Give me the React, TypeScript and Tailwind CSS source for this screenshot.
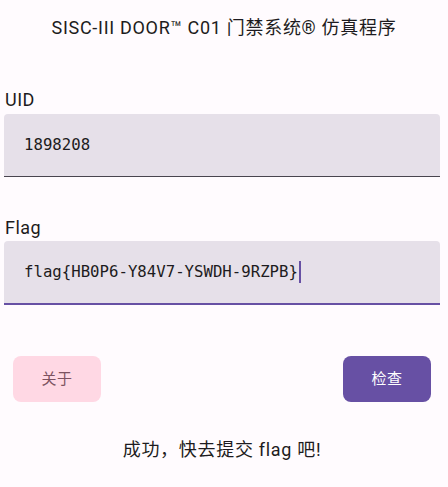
export default function App() {
  return (
    <div
      className="min-h-[487px] w-[448px] bg-[#fffbfe] text-[#1d1b20]"
      style={{ fontFamily: 'Roboto, "Noto Sans CJK SC", sans-serif' }}
    >
      <div className="flex h-[54px] items-center justify-center text-[18px] tracking-[0.7px]">
        SISC-III DOOR™ C01 门禁系统® 仿真程序
      </div>

      <div className="pl-1 pr-2">
        {/* UID */}
        <div className="mt-[34px] pl-px text-[18px] leading-6 tracking-[0.5px]">UID</div>
        <div className="mt-[2px] flex h-[63px] items-center rounded-t-[4px] border-b border-[#49454f] bg-[#e6e0e9] px-5">
          <span className="text-[15.7px]" style={{ fontFamily: '"DejaVu Sans Mono", monospace' }}>
            1898208
          </span>
        </div>

        {/* Flag */}
        <div className="mt-[39px] pl-px text-[18px] leading-6 tracking-[0.5px]">Flag</div>
        <div className="mt-[1px] flex h-[64px] items-center rounded-t-[4px] border-b-2 border-[#6750a4] bg-[#e6e0e9] px-5">
          <span className="text-[15.7px]" style={{ fontFamily: '"DejaVu Sans Mono", monospace' }}>
            flag{'{'}HB0P6-Y84V7-YSWDH-9RZPB{'}'}
          </span>
          <span className="ml-px h-[22px] w-[2px] bg-[#6750a4]" />
        </div>

        {/* Buttons */}
        <div className="mt-[51px] flex justify-between px-[9px]">
          <button className="flex h-[46px] w-[88px] items-center justify-center rounded-lg bg-[#ffd8e4] text-[15px] tracking-[0.5px] text-[#7d5260]">
            关于
          </button>
          <button className="flex h-[46px] w-[88px] items-center justify-center rounded-lg bg-[#6750a4] text-[15px] tracking-[0.5px] text-white">
            检查
          </button>
        </div>

        <div className="mt-[36px] text-center text-[18px] leading-6 tracking-[0.7px]">
          成功，快去提交 flag 吧!
        </div>
      </div>
    </div>
  );
}
